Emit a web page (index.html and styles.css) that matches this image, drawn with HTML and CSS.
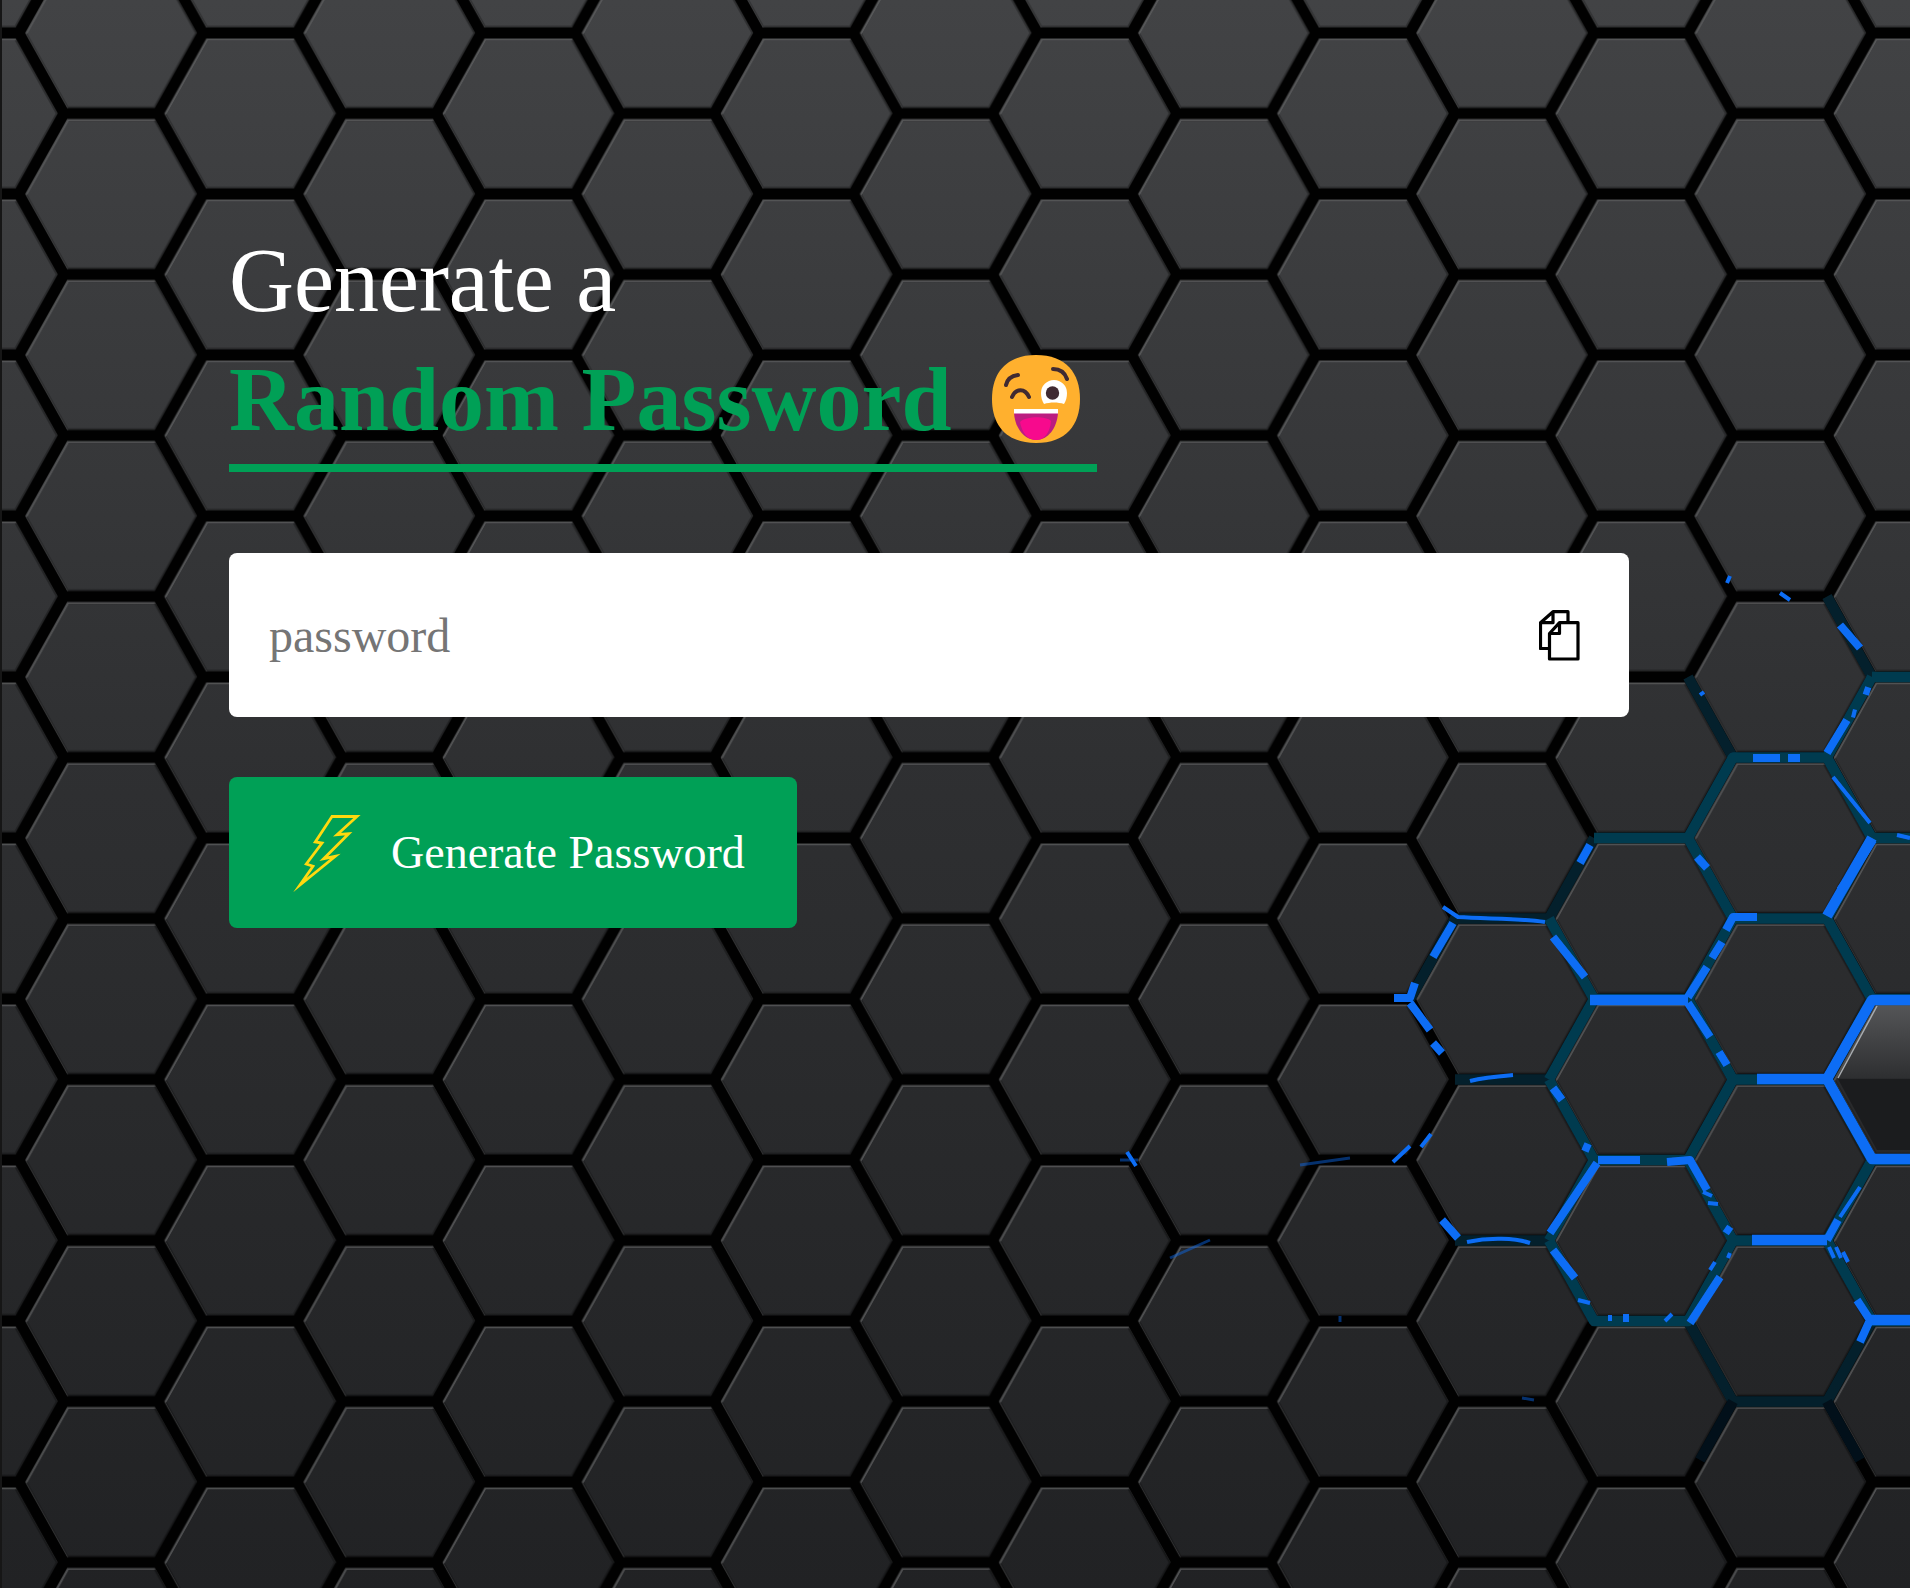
FILE: index.html
```html
<!DOCTYPE html>
<html lang="en">
<head>
<meta charset="utf-8">
<title>Random Password Generator</title>
<link rel="stylesheet" href="styles.css">
</head>
<body>
<svg class="backdrop" viewBox="0 0 1910 1588" width="1910" height="1588" aria-hidden="true">
  <defs>
    <linearGradient id="base" x1="0" y1="0" x2="0" y2="1">
      <stop offset="0" stop-color="#424345"/>
      <stop offset="0.5" stop-color="#2e2f31"/>
      <stop offset="1" stop-color="#212224"/>
    </linearGradient>
    <linearGradient id="glass" x1="0" y1="0" x2="0" y2="1">
      <stop offset="0" stop-color="#545557"/>
      <stop offset="1" stop-color="#2e2f31"/>
    </linearGradient>
    <filter id="soften" x="-5%" y="-5%" width="110%" height="110%">
      <feGaussianBlur stdDeviation="0.5"/>
    </filter>
    <path id="hexlines" fill="none" stroke-linejoin="round" stroke-linecap="round" d="M0 0H94L139.1 80.5L94 161H0M139.1 80.5H233.1L278.2 0H372M233.1 80.5L278.2 161H372M0 0L-45.1 80.5L0 161M139.1 -80.5L94 0M139.1 241.5L94 161M233.1 -80.5L278.2 0M233.1 241.5L278.2 161"/>
    <pattern id="hexSoft" patternUnits="userSpaceOnUse" x="64" y="113.5" width="278.2" height="161">
      <use href="#hexlines" stroke="#000" stroke-opacity="0.3" stroke-width="14.5"/>
    </pattern>
    <pattern id="hexLight" patternUnits="userSpaceOnUse" x="65.2" y="115" width="278.2" height="161">
      <use href="#hexlines" stroke="#88898b" stroke-opacity="0.7" stroke-width="11.5"/>
    </pattern>
    <pattern id="hexDark" patternUnits="userSpaceOnUse" x="64" y="113.5" width="278.2" height="161">
      <use href="#hexlines" stroke="#010101" stroke-width="11"/>
    </pattern>
  </defs>
  <rect width="1910" height="1588" fill="url(#base)"/>
  <rect width="1910" height="1588" fill="url(#hexLight)"/>
  <rect width="1910" height="1588" fill="url(#hexSoft)"/>
  <rect width="1910" height="1588" fill="url(#hexDark)"/>
  <rect width="2" height="1588" fill="#161616"/>
  <path class="glass-top" d="M1877 1006H1910V1078H1838Z"/>
  <path class="glass-bottom" d="M1838 1079H1910V1150H1877Z"/>
  <path class="glass-rim" d="M1838 1078L1877 1006"/>
  <path class="net-dim" d="M1410 999L1455 918.5H1549M1455 1079.5H1549M1455 1240.5H1549M1688 677L1733 757.5M1827 596.5L1872 677M1549 918.5L1594 838M1872 1321L1827 1401.5H1733L1688 1321"/>
  <path class="net-faint" d="M1733 1401.5L1700 1460M1827 1401.5L1860 1460"/>
  <g filter="url(#soften)">
    <path class="net" d="M1872 677L1827 757.5H1733L1688 838H1594M1688 838L1733 918.5H1827L1872 838H1910M1872 838L1827 757.5M1827 918.5L1872 999L1827 1079.5H1733L1688 999H1594L1549 918.5M1733 918.5L1688 999M1594 999L1549 1079.5M1733 1079.5L1688 1160H1594L1549 1079.5M1594 1160L1549 1240.5M1688 1160L1733 1240.5H1827L1872 1160L1827 1079.5M1872 1160H1910M1827 1240.5L1872 1321H1910M1733 1240.5L1688 1321H1594L1549 1240.5M1872 999H1910M1872 677H1910"/>
    <path class="bolt-thick" d="M1910 1000H1872L1827 1079L1872 1159H1910M1757 1079H1827M1827 916L1872 838M1752 1240H1827M1910 1320H1870M1590 1000H1688"/>
    <path class="bolt" d="M1688 997L1707 967M1712 958L1722 942M1726 930L1733 917H1757M1688 1003L1710 1037M1719 1052L1727 1065M1553 937L1585 977M1453 923L1433 957M1394 998H1410L1415 983M1410 1003L1430 1030M1433 1043L1442 1053M1553 1088L1562 1100M1583 1146L1590 1149M1598 1160H1640M1667 1162L1690 1160L1707 1190M1597 1163L1550 1233M1725 1228L1731 1232M1827 1240L1838 1220M1442 1220L1458 1238M1553 1250L1575 1278M1857 1300L1870 1320L1860 1342M1720 1277L1690 1323M1827 753L1847 720M1852 713L1856 714M1864 690L1870 692M1753 758H1780M1788 758H1800M1590 845L1580 863M1697 857L1707 868M1873 840L1857 865M1853 872L1840 890M1840 625L1860 648"/>
    <path class="bolt-thin" d="M1443 907L1458 917C1485 919 1520 918 1545 922M1840 1217L1860 1187M1470 1081C1485 1077 1500 1076 1513 1075M1467 1242C1490 1237 1515 1238 1530 1243M1410 1146L1393 1162M1833 777L1870 823M1897 835L1910 838M1700 695L1704 692M1780 593L1790 600M1727 583L1730 576M1703 1192L1712 1196M1708 1203L1718 1204M1730 1253L1728 1258M1715 1262L1710 1270M1829 1247L1834 1258M1836 1247L1841 1258M1843 1252L1848 1262M1665 1321L1672 1314M1610 1321V1315M1625 1322V1314M1627 1322V1314M1578 1300L1590 1303M1127 1152L1136 1166M1421 1147L1431 1134"/>
  </g>
  <path class="bolt-faint" d="M1170 1258L1210 1240M1340 1322V1316M1522 1398L1534 1400M1300 1165L1350 1158M1120 1160H1138"/>
</svg>
<main class="page">
  <h1 class="title">
    <span class="title-line">Generate a</span>
    <span class="title-accent">
      <span class="title-strong">Random Password</span>
      <svg class="emoji" viewBox="0 0 88 88" width="88" height="88" aria-hidden="true">
        <path class="emoji-face" d="M44 0C74 0 88 18 88 44C88 70 74 88 44 88C14 88 0 70 0 44C0 18 14 0 44 0Z"/>
        <path class="emoji-stroke" d="M20 42C24 33 33 33 37 42M14 30C15 25 19 21 26 20M61 14C68 14 73 18 75 24"/>
        <path class="emoji-white" d="M49 38a13 13 0 1 1 26 0c0 4-1 8-3 11c-6-2-14-2-20 0c-2-3-3-7-3-11Z"/>
        <circle class="emoji-pupil" cx="60.5" cy="38" r="6.7"/>
        <path class="emoji-mouth" d="M22 58H66C65 73 56 85 44 85C32 85 23 73 22 58Z"/>
        <rect class="emoji-white" x="22" y="54" width="44" height="4.5"/>
        <path class="emoji-tongue" d="M28 67C34 61 54 61 59 66C58 78 52 85 44 85C36 85 30 78 28 67Z"/>
      </svg>
    </span>
  </h1>
  <div class="field">
    <input class="field-input" type="text" placeholder="password" readonly>
    <svg class="copy" viewBox="0 0 41 51" width="41" height="51" aria-hidden="true">
      <path d="M10.5 38.5H1.5V12.7L14 1.7H29V12.7M14 1.7V12.7H1.5M10.5 23.5L20.5 12.7H39V49H10.5ZM20.5 12.7V23.5H10.5"/>
    </svg>
  </div>
  <button class="generate" type="button">
    <svg class="flash" viewBox="0 0 67 78" width="67" height="78" aria-hidden="true">
      <path d="M39 2.5L22.3 28L29 29L13.3 50L20 52.3L7 71L42.3 42.3L30.7 44.7L55.7 19.7L44 20.7L64 2.5Z"/>
    </svg>
    <span>Generate Password</span>
  </button>
</main>
</body>
</html>
```

FILE: styles.css
```css
html, body {
  margin: 0;
  padding: 0;
  height: 100%;
  overflow: hidden;
  background: #2e2f31;
}

body {
  position: relative;
  font-family: "Liberation Serif", "Times New Roman", serif;
}

.backdrop {
  position: absolute;
  inset: 0;
  display: block;
}

.page {
  position: relative;
  box-sizing: border-box;
  width: 1910px;
  height: 1588px;
  padding: 221px 281px 0 229px;
}

.title {
  margin: 0 0 81px;
  font-size: 90px;
  line-height: 119px;
  font-weight: 400;
  color: #fff;
}

.title-line {
  display: block;
}

.title-accent {
  display: flex;
  align-items: flex-start;
  width: 868px;
  height: 119px;
  padding-bottom: 5px;
  border-bottom: 8px solid #00a056;
  color: #00a056;
}

.title-strong {
  font-weight: 700;
  white-space: nowrap;
}

.emoji {
  margin: 15px 0 0 40px;
  flex: none;
}

.emoji-face { fill: #ffb02e; }
.emoji-stroke { fill: none; stroke: #402a32; stroke-width: 4; stroke-linecap: round; }
.emoji-white { fill: #fff; }
.emoji-pupil { fill: #402a32; }
.emoji-mouth { fill: #bb1d80; }
.emoji-tongue { fill: #f70a8d; }

.field {
  display: flex;
  align-items: center;
  box-sizing: border-box;
  height: 164px;
  padding: 0 49px 0 40px;
  background: #fff;
  border-radius: 8px;
}

.field-input {
  flex: 1;
  min-width: 0;
  border: 0;
  outline: 0;
  padding: 0;
  background: transparent;
  font: 48px "Liberation Serif", "Times New Roman", serif;
}

.field-input::placeholder {
  color: #757575;
  opacity: 1;
}

.copy {
  flex: none;
}

.copy path {
  fill: none;
  stroke: #000;
  stroke-width: 3.2;
  stroke-linejoin: round;
}

.generate {
  display: flex;
  align-items: center;
  gap: 31px;
  box-sizing: border-box;
  width: 568px;
  height: 151px;
  margin-top: 60px;
  padding: 0 0 0 64px;
  border: 0;
  border-radius: 8px;
  background: #00a056;
  color: #fff;
  font: 46px "Liberation Serif", "Times New Roman", serif;
}

.flash {
  flex: none;
  overflow: visible;
}

.flash path {
  fill: none;
  stroke: #ffd90f;
  stroke-width: 2.8;
  stroke-miterlimit: 10;
}

.glass-top { fill: url(#glass); }
.glass-bottom { fill: #1b1c1e; }
.glass-rim { fill: none; stroke: #a8acb0; stroke-width: 1.5; }

.net {
  fill: none;
  stroke: #053a50;
  stroke-width: 10.5;
  stroke-linejoin: round;
}

.net-dim {
  fill: none;
  stroke: #04202c;
  stroke-width: 10.5;
  stroke-linejoin: round;
}

.net-faint {
  fill: none;
  stroke: #02101a;
  stroke-width: 10.5;
}

.bolt-thick,
.bolt,
.bolt-thin,
.bolt-faint {
  fill: none;
  stroke: #0a6df5;
  stroke-linejoin: round;
}

.bolt-thick { stroke-width: 10.5; }
.bolt { stroke-width: 8; }
.bolt-thin { stroke-width: 4; }
.bolt-faint { stroke-width: 3; stroke-opacity: 0.45; }
```
